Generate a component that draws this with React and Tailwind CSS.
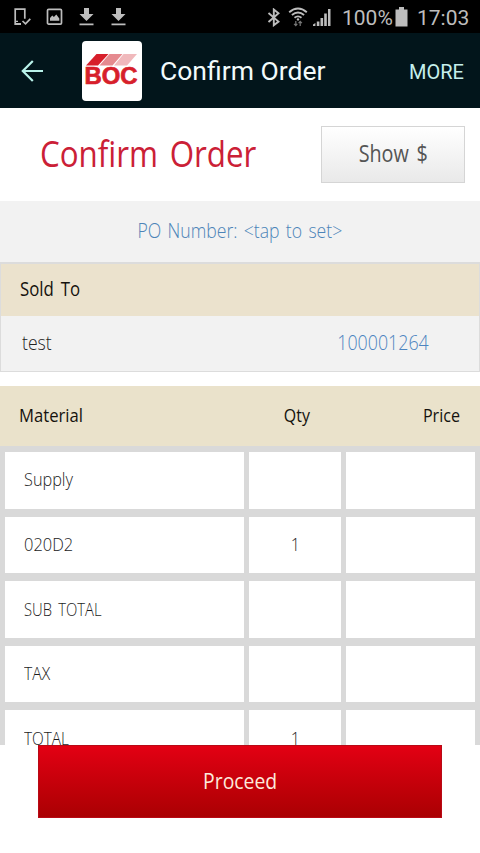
import clsx from 'clsx';

const rows = [
    { material: 'Supply', qty: '', stretch: 'scale-x-[0.88]' },
    { material: '020D2', qty: '1', stretch: 'scale-x-[0.89]' },
    { material: 'SUB TOTAL', qty: '', stretch: 'scale-x-[0.80] [word-spacing:3px]' },
    { material: 'TAX', qty: '', stretch: 'scale-x-[0.85]' },
    { material: 'TOTAL', qty: '1', stretch: 'scale-x-[0.83]' },
];

// Open Sans squeezed towards the narrow brand face
function Narrow({ className, children }) {
    return <span className={clsx('inline-block whitespace-nowrap pb-[2px]', className)}>{children}</span>;
}

function DownloadIcon() {
    return (
        <svg width="15" height="18" viewBox="0 0 15 18" fill="currentColor">
            <path d="M5 0h5v6h4.5L7.5 13 .5 6H5zM.5 15.5h14v1.8H.5z" />
        </svg>
    );
}

function StatusBar() {
    return (
        <div className="flex h-[33px] shrink-0 items-center bg-black text-[#bdbdbd]">
            <div className="ml-[13px] flex items-center">
                <svg width="19" height="18" viewBox="0 0 19 18" fill="none" stroke="currentColor" strokeWidth="1.7">
                    <path d="M8 16.2H2.2V1.2h9.6v9.5" />
                    <path d="M2 13.3h3M2 15.6h6" strokeWidth="1.2" />
                    <path d="m9.5 13 3 2.8 4.8-5" />
                </svg>
                <svg className="ml-[14px]" width="17" height="18" viewBox="0 0 17 18">
                    <rect x="1.5" y="1.3" width="14" height="14.8" rx="1.2" fill="none" stroke="currentColor" strokeWidth="1.7" />
                    <path d="M4 12.8V10l2.3-2.5 1.6 1.4L10.300 6.6l3 4v2.2z" fill="currentColor" />
                </svg>
                <div className="ml-[16px] flex gap-[17px]">
                    <DownloadIcon />
                    <DownloadIcon />
                </div>
            </div>
            <div className="ml-auto mr-[12px] flex items-center pt-px">
                <svg width="14" height="19" viewBox="0 0 14 19" fill="none" stroke="currentColor" strokeWidth="1.9">
                    <path d="m1.5 5 10 8.6L6.8 17.2V1.5l4.7 3.8L1.5 14" />
                </svg>
                <svg className="ml-[7px]" width="20" height="20" viewBox="0 0 20 20" fill="none" stroke="currentColor" strokeWidth="1.9">
                    <path d="M1.2 5.2q8.8-7.4 17.6 0M3.9 8.1q6.1-5 12.2 0M6.5 10.7q3.5-2.6 7 0" />
                    <circle cx="10" cy="12.4" r="1.2" fill="currentColor" stroke="none" />
                    <path d="M7.8 14v4.5m-1.7-1.7 1.7 1.8 1.5-1.8M12.2 19v-4.6m-1.6 1.8 1.6-1.9 1.7 1.9" stroke="#777" strokeWidth="1.2" />
                </svg>
                <svg className="ml-[5px]" width="18" height="19" viewBox="0 0 18 19" fill="currentColor">
                    <path d="M0 16.500 2.400 15v3H0zM3.800 13.400h2.600V18H3.800zM7.500 10h2.600v8H7.500zM11.200 5.500h2.600V18h-2.600zM15 1h2.500v17H15z" />
                </svg>
                <span className="ml-[11px] w-[52px] whitespace-nowrap pt-0.5 text-[21px] leading-none">100%</span>
                <svg className="ml-[1px]" width="13" height="20" viewBox="0 0 13 20" fill="currentColor">
                    <path d="M4 0h5v2.500h3.500V19.500H.5V2.500H4z" />
                </svg>
                <span className="ml-[9px] w-[51px] whitespace-nowrap pt-0.5 text-[21px] leading-none">17:03</span>
            </div>
        </div>
    );
}

function Logo() {
    return (
        <svg width="60" height="60" viewBox="0 0 60 60">
            <rect width="60" height="60" rx="4" fill="#fff" />
            <path d="M14.500 13h12L16 24.500H4z" fill="#d71f2b" />
            <path d="M27.500 13h13L30.500 24.500H17.500z" fill="#e58a8f" />
            <path d="M41.500 13H55L45 24.500H32z" fill="#f0b9bc" />
            <text x="2.500" y="42.500" textLength="53" lengthAdjust="spacingAndGlyphs" fontFamily="Liberation Sans" fontWeight="700" fontSize="23" fill="#d71f2b" stroke="#d71f2b" strokeWidth="0.700">
                BOC
            </text>
        </svg>
    );
}

function AppBar() {
    return (
        <header className="flex h-[75px] shrink-0 items-center bg-[#02151b] text-[#f2fbfb]">
            <svg className="ml-[21px] text-[#b9f2ea]" width="23" height="22" viewBox="0 0 23 22" fill="none" stroke="currentColor" strokeWidth="2.200">
                <path d="M22 11H2M11.800 1 1.800 11l10 10" />
            </svg>
            <div className="ml-[38px]">
                <Logo />
            </div>
            <h1 className="ml-[18px] whitespace-nowrap pt-0.5 text-[26.5px] leading-none">Confirm Order</h1>
            <button className="ml-auto mr-[16px] pt-0.5 text-[20px] leading-none text-[#c5efec]">MORE</button>
        </header>
    );
}

export default function App() {
    return (
        <div className="flex h-[853px] w-[480px] flex-col overflow-hidden bg-white font-['Roboto',sans-serif]">
            <StatusBar />
            <AppBar />

            <main className="flex min-h-0 flex-1 flex-col font-['Open_Sans',sans-serif]">
                <div className="flex h-[93px] shrink-0 items-center justify-between pl-[40px] pr-[15px]">
                    <h2 className="text-[36px] leading-none text-[#cb2036]">
                        <Narrow className="origin-left scale-x-[0.87] [word-spacing:4px]">Confirm Order</Narrow>
                    </h2>
                    <button className="h-[57px] w-[144px] border border-[#d5d5d5] bg-linear-to-b from-white to-[#e9e9e9] text-[23px] leading-none text-[#555]">
                        <Narrow className="scale-x-[0.86] [word-spacing:3px]">Show $</Narrow>
                    </button>
                </div>

                <div className="flex h-[61px] shrink-0 items-center justify-center bg-[#f2f2f2] text-[21px] font-light text-[#4c84b8]">
                    <Narrow className="scale-x-[0.84] [word-spacing:2px]">PO Number: &lt;tap to set&gt;</Narrow>
                </div>

                <section className="h-[110px] shrink-0 border border-[#dcdcdc] border-t-2 bg-[#f2f2f2]">
                    <div className="flex h-[52px] items-center bg-[#ebe2cd] pl-[19px] text-[20px] text-[#15120e]">
                        <Narrow className="origin-left scale-x-[0.84] [word-spacing:3px]">Sold To</Narrow>
                    </div>
                    <div className="flex h-[55px] items-center justify-between pl-[21px] pr-[50px] text-[20px] font-light">
                        <Narrow className="origin-left scale-x-[0.88] text-[#222]">test</Narrow>
                        <Narrow className="origin-right scale-x-[0.89] text-[#4c84c0]">100001264</Narrow>
                    </div>
                </section>

                <section className="mt-[14px] flex h-[359px] shrink-0 flex-col overflow-hidden bg-[#d9d9d9]">
                    <div className="grid h-[60px] shrink-0 grid-cols-[249px_92px_1fr] items-center bg-[#eae2cb] pl-[1px] text-[18.5px] text-[#15120e]">
                        <Narrow className="origin-left scale-x-[0.90] pl-[20px]">Material</Narrow>
                        <Narrow className="scale-x-[0.86] pl-[2px] text-center">Qty</Narrow>
                        <Narrow className="origin-right scale-x-[0.87] pr-[23px] text-right">Price</Narrow>
                    </div>
                    <div className="flex flex-col gap-[8px] px-[5px] pt-[6px]">
                        {rows.map(({ material, qty, stretch }) => (
                            <div key={material} className="grid h-[56.6px] shrink-0 grid-cols-[239px_92px_129px] gap-[5px] text-[18.5px] font-light text-[#1c1c1c]">
                                <div className="flex items-center bg-white pl-[19px]">
                                    <Narrow className={clsx('origin-left', stretch)}>{material}</Narrow>
                                </div>
                                <div className="flex items-center justify-center bg-white">
                                    <Narrow className="scale-x-[0.87]">{qty}</Narrow>
                                </div>
                                <div className="bg-white" />
                            </div>
                        ))}
                    </div>
                </section>

                <div className="flex flex-1 items-start justify-center">
                    <button className="h-[73px] w-[404px] border border-[#b80a16] bg-linear-to-b from-[#e30013] to-[#aa0003] text-[21.5px] leading-none text-[#fde9dc]">
                        <Narrow className="scale-x-[0.9]">Proceed</Narrow>
                    </button>
                </div>
            </main>
        </div>
    );
}
